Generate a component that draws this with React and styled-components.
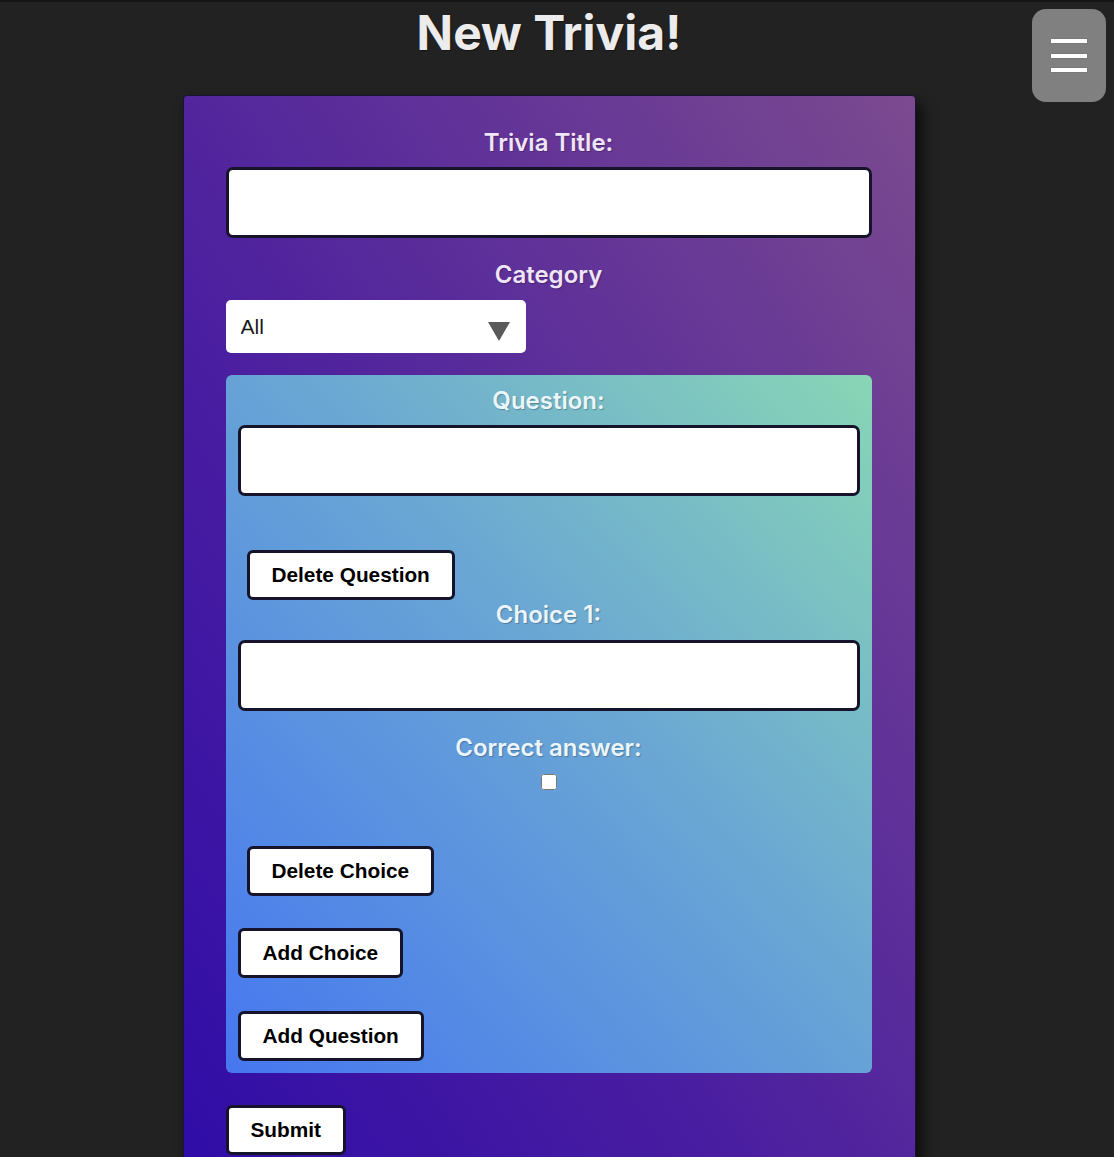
import React, { useState } from 'react'
import styled, { createGlobalStyle } from 'styled-components'

const GlobalStyle = createGlobalStyle`
  * { box-sizing: border-box; }
  body {
    margin: 0;
    background: #222222;
    border-top: 2px solid #141414;
    font-family: Inter, "Noto Sans", sans-serif;
  }
`

// content is centred in the width left beside the scrollbar
const Page = styled.div`
  position: relative;
  min-height: 1157px;
  padding-right: 16px;
  display: flex;
  flex-direction: column;
  align-items: center;
`

const Heading = styled.h1`
  margin: 0;
  padding-top: 7px;
  font-size: 48px;
  line-height: 48px;
  font-weight: 700;
  color: #ececec;
  text-shadow: 1px 1px 1px rgba(0, 0, 0, 0.4);
`

const MenuButton = styled.button`
  position: absolute;
  top: 7px;
  right: 8px;
  width: 74px;
  height: 93px;
  border: none;
  border-radius: 14px;
  background: #808080;
  display: flex;
  flex-direction: column;
  align-items: center;
  justify-content: center;
  gap: 10.5px;
  padding: 0;
  cursor: pointer;
`

const Bar = styled.span`
  display: block;
  width: 36px;
  height: 4px;
  background: #ffffff;
  box-shadow: 0 0 1px rgba(0, 0, 0, 0.5);
`

const Card = styled.form`
  margin-top: 38px;
  width: 733px;
  padding: 32px 43px 40px 42px;
  border: 1px solid #1c1236;
  border-radius: 4px;
  background: linear-gradient(to top right, #2f0ca8 0%, #4a1ea0 40%, #7b4a8f 100%);
  box-shadow: 6px 8px 14px rgba(0, 0, 0, 0.65);
  display: flex;
  flex-direction: column;
  align-items: flex-start;
`

const Label = styled.label`
  align-self: stretch;
  text-align: center;
  font-size: 24px;
  line-height: 29px;
  font-weight: 600;
  color: ${p => (p.$light ? '#eaf6fb' : '#efe4f8')};
  text-shadow: 1px 1px 1px rgba(0, 0, 0, 0.25);
  margin-top: ${p => p.$top || 0}px;
`

const TextInput = styled.input`
  align-self: stretch;
  height: 71px;
  margin-top: ${p => p.$top || 10}px;
  border: 3px solid #15142a;
  border-radius: 7px;
  background: #ffffff;
  font-size: 20px;
  padding: 0 12px;
`

const SelectWrap = styled.div`
  position: relative;
  margin-top: 11px;
  width: 300px;
  height: 53px;
`

const Select = styled.select`
  appearance: none;
  width: 100%;
  height: 100%;
  border: none;
  border-radius: 5px;
  background: #ffffff;
  padding: 0 15px;
  font-family: "Liberation Sans", Arial, sans-serif;
  font-size: 21px;
  color: #1a1a1a;
`

const Arrow = styled.svg`
  position: absolute;
  right: 16px;
  top: 22px;
  pointer-events: none;
`

const QuestionBox = styled.section`
  align-self: stretch;
  margin-top: 22px;
  padding: 11px 12px 12px 12px;
  border-radius: 6px;
  background: linear-gradient(to top right, #4677f0 0%, #6aa6d4 55%, #88d6b5 100%);
  display: flex;
  flex-direction: column;
  align-items: flex-start;
`

const Button = styled.button`
  margin-top: ${p => p.$top || 0}px;
  margin-left: ${p => p.$indent || 0}px;
  height: 50px;
  padding: 0 22px;
  border: 3px solid #15142a;
  border-radius: 6px;
  background: #ffffff;
  color: #000000;
  font-family: "Liberation Sans", Arial, sans-serif;
  font-weight: 700;
  font-size: 20.8px;
  cursor: pointer;
`

const Check = styled.input`
  align-self: center;
  margin: 12px 0 0 0;
  width: 16px;
  height: 16px;
`

export default function App() {
  const [title, setTitle] = useState('')

  return (
    <>
      <GlobalStyle />
      <Page>
        <Heading>New Trivia!</Heading>
        <MenuButton type="button" aria-label="menu">
          <Bar />
          <Bar />
          <Bar />
        </MenuButton>

        <Card onSubmit={e => e.preventDefault()}>
          <Label>Trivia Title:</Label>
          <TextInput value={title} onChange={e => setTitle(e.target.value)} />

          <Label $top={22}>Category</Label>
          <SelectWrap>
            <Select defaultValue="all">
              <option value="all">All</option>
            </Select>
            <Arrow width="22" height="19" viewBox="0 0 22 19">
              <polygon points="0,0 22,0 11,19" fill="#5a5a5a" />
            </Arrow>
          </SelectWrap>

          <QuestionBox>
            <Label $light>Question:</Label>
            <TextInput $top={10} />
            <Button type="button" $top={54} $indent={9}>Delete Question</Button>

            <Label $light>Choice 1:</Label>
            <TextInput $top={11} />

            <Label $light $top={22}>Correct answer:</Label>
            <Check type="checkbox" />

            <Button type="button" $top={56} $indent={9}>Delete Choice</Button>
            <Button type="button" $top={32}>Add Choice</Button>
            <Button type="button" $top={33}>Add Question</Button>
          </QuestionBox>

          <Button type="submit" $top={32}>Submit</Button>
        </Card>
      </Page>
    </>
  )
}
